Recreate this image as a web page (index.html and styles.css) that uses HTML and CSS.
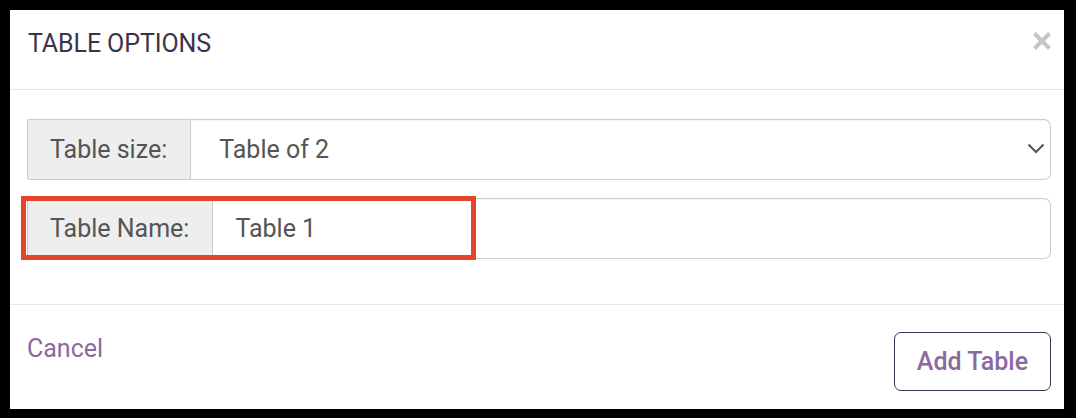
FILE: index.html
```html
<!DOCTYPE html>
<html lang="en">
<head>
<meta charset="utf-8">
<title>Table Options</title>
<link rel="stylesheet" href="styles.css">
</head>
<body>
<div class="modal">
  <div class="modal-header">
    <h4 class="modal-title">TABLE OPTIONS</h4>
    <button class="close" type="button" aria-label="Close">
      <svg width="20" height="20" viewBox="0 0 20 20" aria-hidden="true">
        <path d="M2.5 2.5 L17.5 17.5 M17.5 2.5 L2.5 17.5" stroke="#c6c6c6" stroke-width="4.2" stroke-linecap="butt" fill="none"/>
      </svg>
    </button>
  </div>
  <div class="modal-body">
    <div class="input-group">
      <span class="addon">Table size:</span>
      <div class="select-wrap">
        <select class="control select">
          <option>Table of 2</option>
          <option>Table of 4</option>
          <option>Table of 6</option>
        </select>
        <svg class="chevron" width="18" height="11" viewBox="0 0 18 11" aria-hidden="true">
          <polyline points="1.5,1.5 9,9 16.5,1.5" fill="none" stroke="#555" stroke-width="2"/>
        </svg>
      </div>
    </div>
    <div class="input-group second">
      <span class="addon">Table Name:</span>
      <input class="control" type="text" value="Table 1">
      <div class="highlight"></div>
    </div>
  </div>
  <div class="modal-footer">
    <a class="cancel" href="#">Cancel</a>
    <button class="btn-add" type="button">Add Table</button>
  </div>
</div>
</body>
</html>
```

FILE: styles.css
```css
* { box-sizing: border-box; }

html, body {
  margin: 0;
  padding: 0;
  background: #000;
  height: 418px;
  overflow: hidden;
}

body {
  font-family: Roboto, "Liberation Sans", Arial, sans-serif;
  padding: 10px 12px 9px 10px;
}

.modal {
  width: 1054px;
  height: 399px;
  background: #fff;
  display: flex;
  flex-direction: column;
}

.modal-header {
  height: 80px;
  border-bottom: 1px solid #e6e6e6;
  display: flex;
  justify-content: space-between;
  align-items: flex-start;
  padding: 19px 12px 0 18px;
}

.modal-title {
  margin: 0;
  font-size: 25px;
  font-weight: 400;
  line-height: 29px;
  color: #3d3348;
  letter-spacing: -0.1px;
}

.close {
  border: 0;
  background: none;
  padding: 0;
  margin-top: 2px;
  width: 20px;
  height: 20px;
  display: block;
  cursor: pointer;
}

.close svg { display: block; }

.modal-body {
  height: 214px;
  padding: 29px 13px 0 17px;
  display: flex;
  flex-direction: column;
  gap: 18px;
}

.input-group {
  display: flex;
  height: 61px;
  position: relative;
}

.addon {
  display: flex;
  align-items: center;
  padding: 0 23px 0 22px;
  background: #eeeeee;
  border: 1px solid #cccccc;
  border-radius: 2px 0 0 2px;
  font-size: 25px;
  color: #555;
  white-space: nowrap;
}

.select-wrap {
  flex: 1;
  position: relative;
  display: flex;
}

.control {
  flex: 1;
  min-width: 0;
  height: 100%;
  border: 1px solid #cccccc;
  border-left: 0;
  border-radius: 0 7px 7px 0;
  background: #fff;
  font-family: Roboto, "Liberation Sans", Arial, sans-serif;
  font-size: 25px;
  color: #555;
  padding: 0 40px 0 22px;
  outline: none;
  box-shadow: inset 0 1px 1px rgba(0,0,0,0.04);
}

.select {
  appearance: none;
  -webkit-appearance: none;
  padding-left: 28px;
}

.chevron {
  position: absolute;
  right: 6px;
  top: 24px;
  pointer-events: none;
}

.highlight {
  position: absolute;
  left: -6px;
  top: -2px;
  width: 455px;
  height: 64px;
  border: 5px solid #e5432c;
  pointer-events: none;
}

.modal-footer {
  flex: 1;
  border-top: 1px solid #e6e6e6;
  display: flex;
  justify-content: space-between;
  align-items: flex-start;
  padding: 27px 13px 0 17px;
}

.cancel {
  margin-top: 2px;
  font-size: 25px;
  line-height: 29px;
  color: #8a6a9e;
  text-decoration: none;
}

.btn-add {
  width: 157px;
  height: 59px;
  border: 1px solid #3f3352;
  border-radius: 7px;
  background: #fff;
  font-family: Roboto, "Liberation Sans", Arial, sans-serif;
  font-size: 25px;
  font-weight: 500;
  color: #8a6a9e;
  padding: 0;
  cursor: pointer;
}
```
